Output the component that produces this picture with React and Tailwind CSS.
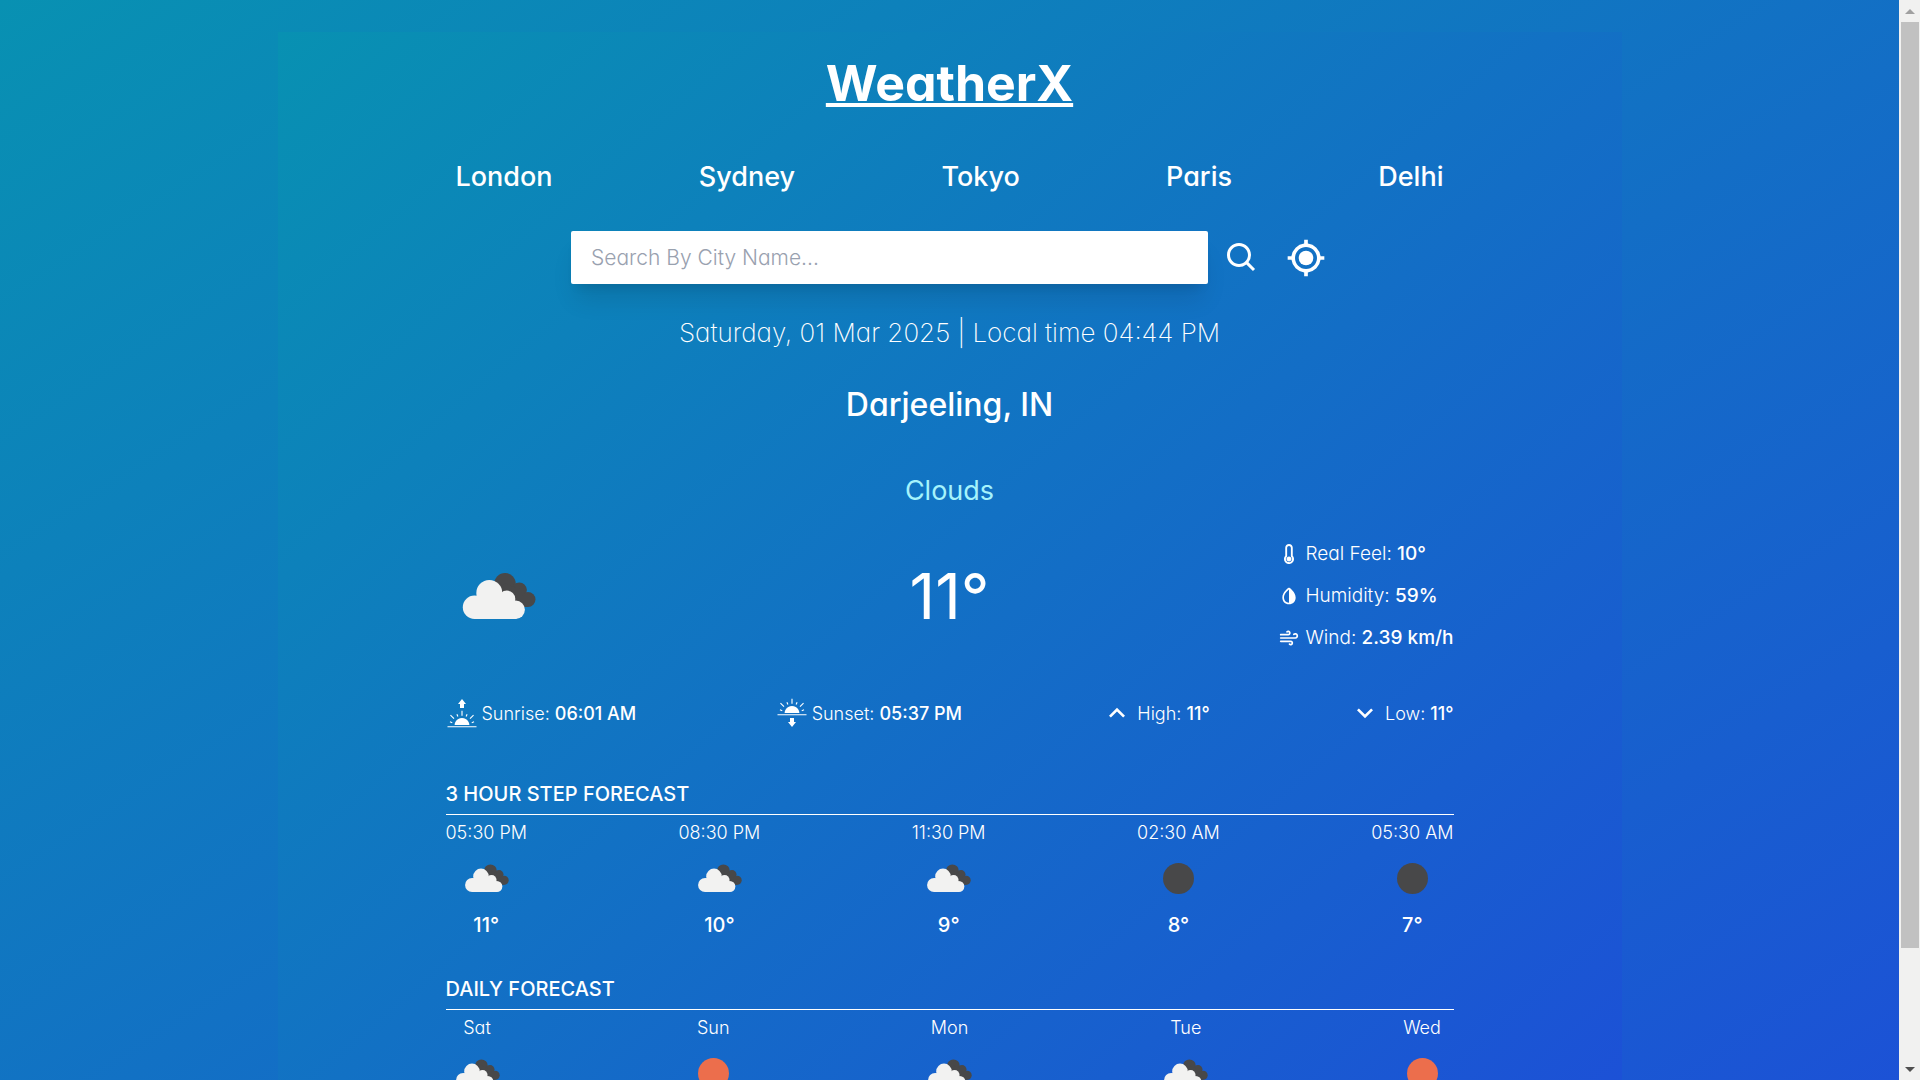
import { BiSearch, BiCurrentLocation, BiSolidDropletHalf } from "react-icons/bi";
import { FaThermometerEmpty } from "react-icons/fa";
import { FiWind } from "react-icons/fi";
import { GiSunrise, GiSunset } from "react-icons/gi";
import { MdKeyboardArrowUp, MdKeyboardArrowDown } from "react-icons/md";

const cities = ["London", "Sydney", "Tokyo", "Paris", "Delhi"];

const details = [
  { Icon: FaThermometerEmpty, label: "Real Feel:", value: "10°" },
  { Icon: BiSolidDropletHalf, label: "Humidity:", value: "59%" },
  { Icon: FiWind, label: "Wind:", value: "2.39 km/h" },
];

const sunAndRange = [
  { Icon: GiSunrise, label: "Sunrise:", value: "06:01 AM" },
  { Icon: GiSunset, label: "Sunset:", value: "05:37 PM" },
  { Icon: MdKeyboardArrowUp, label: "High:", value: "11°" },
  { Icon: MdKeyboardArrowDown, label: "Low:", value: "11°" },
];

const hourly = [
  { title: "05:30 PM", icon: "clouds", temp: "11°" },
  { title: "08:30 PM", icon: "clouds", temp: "10°" },
  { title: "11:30 PM", icon: "clouds", temp: "9°" },
  { title: "02:30 AM", icon: "night", temp: "8°" },
  { title: "05:30 AM", icon: "night", temp: "7°" },
];

const daily = [
  { title: "Sat", icon: "clouds" },
  { title: "Sun", icon: "sun" },
  { title: "Mon", icon: "clouds" },
  { title: "Tue", icon: "clouds" },
  { title: "Wed", icon: "sun" },
];

function WeatherIcon({ kind, className }) {
  return (
    <svg viewBox="0 0 105 105" className={className} aria-hidden="true">
      {kind === "clouds" && (
        <g transform="translate(16.5 29)">
          <g fill="#484849">
            <circle cx="42.5" cy="10.8" r="10.8" />
            <circle cx="56.8" cy="17" r="7.6" />
            <circle cx="65.5" cy="26.5" r="7.5" />
            <path d="M42 10 L57 16 L66 34 H50 L36 20 Z" />
          </g>
          <g fill="#f2f2f1">
            <circle cx="12" cy="34.3" r="11.7" />
            <circle cx="26.8" cy="20" r="13" />
            <circle cx="44.4" cy="26" r="8.4" />
            <circle cx="53.2" cy="36.8" r="9.2" />
            <path d="M12 23 H45 L54 34 V46 H12 Z" />
          </g>
        </g>
      )}
      {kind === "night" && <circle cx="52.5" cy="52.5" r="25.8" fill="#484849" />}
      {kind === "sun" && <circle cx="52.5" cy="52.5" r="25.8" fill="#ec6e4c" />}
    </svg>
  );
}

function Forecast({ title, items }) {
  return (
    <section className="mt-7">
      <h2 className="flex h-[41px] items-center text-[20px] font-medium uppercase">{title}</h2>
      <hr className="border-white" />
      <ul className="flex justify-between">
        {items.map((item) => (
          <li key={item.title} className="flex flex-col items-center">
            <p className="pt-1 text-[18px] leading-7 font-light">{item.title}</p>
            <WeatherIcon kind={item.icon} className="size-[63px]" />
            {item.temp && <p className="text-[20px] leading-[30px] font-medium">{item.temp}</p>}
          </li>
        ))}
      </ul>
    </section>
  );
}

function Scrollbar() {
  return (
    <div className="flex h-screen w-[21px] shrink-0 flex-col items-center bg-[#f1f1f0]" aria-hidden="true">
      <svg viewBox="0 0 21 22" className="h-[22px] w-[21px]">
        <path d="M6 14 L11 9 L16 14 Z" fill="#a0a0a0" />
      </svg>
      <div className="flex w-full grow flex-col pl-0.5 pr-px">
        <div className="grow-[926] bg-[#c1c1c1]" />
        <div className="grow-[110]" />
      </div>
      <svg viewBox="0 0 21 22" className="h-[22px] w-[21px]">
        <path d="M6 9 L11 14 L16 9 Z" fill="#505050" />
      </svg>
    </div>
  );
}

export default function App() {
  return (
    <div className="flex h-screen items-start overflow-hidden font-['Inter',sans-serif] text-white [font-feature-settings:'cv11']">
      <div className="h-max grow bg-linear-to-br/srgb from-[#0891b2] to-[#1d4ed8] py-8">
        <main className="mx-auto max-w-[1344px] bg-linear-to-br/srgb from-[#0891b2] to-[#1d4ed8] px-[168px] pt-[19px] pb-20">
          <h1 className="text-center text-[50px] leading-16 font-bold underline decoration-4 underline-offset-2">
            WeatherX
          </h1>

          <nav className="mt-[42px] flex justify-between px-2.5">
            {cities.map((city) => (
              <button key={city} type="button" className="text-[27px] leading-10 font-medium">
                {city}
              </button>
            ))}
          </nav>

          <form className="mt-[34px] flex items-center justify-center" onSubmit={(e) => e.preventDefault()}>
            <input
              type="text"
              aria-label="City name"
              placeholder="Search By City Name..."
              className="h-[53px] w-[637px] rounded-xs bg-white px-5 text-[21px] font-light text-gray-500 shadow-xl outline-none placeholder:text-gray-400"
            />
            <button type="submit" aria-label="Search" className="ml-4">
              <BiSearch className="size-9" />
            </button>
            <button type="button" aria-label="Use current location" className="ml-6">
              <BiCurrentLocation className="size-11" />
            </button>
          </form>

          <p className="mt-[31px] text-center text-[26px] leading-9 font-extralight">
            Saturday, 01 Mar 2025 | Local time 04:44 PM
          </p>
          <p className="mt-[34px] text-center text-[32px] leading-10 font-medium">Darjeeling, IN</p>
          <p className="mt-[48px] text-center text-[27px] leading-9 text-[#a5f3fc]">Clouds</p>

          <div className="mt-[31px] grid grid-cols-[1fr_auto_1fr] items-center">
            <WeatherIcon kind="clouds" className="size-[105px]" />
            <p className="text-[63px] leading-16">11°</p>
            <ul className="flex flex-col gap-3.5 justify-self-end">
              {details.map(({ Icon, label, value }) => (
                <li key={label} className="flex items-center gap-1.5 text-[19px] leading-7 font-light">
                  <Icon className="size-5" />
                  <span>
                    {label} <span className="font-medium">{value}</span>
                  </span>
                </li>
              ))}
            </ul>
          </div>

          <ul className="mt-[45px] mb-[44px] flex items-center justify-between">
            {sunAndRange.map(({ Icon, label, value }) => (
              <li key={label} className="flex items-center gap-1 text-[18px] font-light">
                <Icon className="size-8" />
                <span>
                  {label} <span className="font-medium">{value}</span>
                </span>
              </li>
            ))}
          </ul>

          <Forecast title="3 hour step forecast" items={hourly} />
          <Forecast title="Daily forecast" items={daily} />
        </main>
      </div>
      <Scrollbar />
    </div>
  );
}
